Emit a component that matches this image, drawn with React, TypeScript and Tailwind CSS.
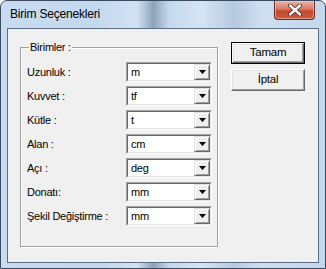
import React from "react";

const units: [string, string][] = [
  ["Uzunluk :", "m"],
  ["Kuvvet :", "tf"],
  ["Kütle :", "t"],
  ["Alan :", "cm"],
  ["Açı :", "deg"],
  ["Donatı:", "mm"],
  ["Şekil Değiştirme :", "mm"],
];

function Combo({ value }: { value: string }) {
  return (
    <div className="h-[20px] w-[86px] border border-t-[#a0a0a0] border-l-[#a0a0a0] border-r-white border-b-white">
      <div className="flex h-full w-full items-stretch border border-t-[#696969] border-l-[#696969] border-r-[#e3e3e3] border-b-[#e3e3e3] bg-white">
        <span className="flex-1 pl-[3px] leading-[16px]">{value}</span>
        <div className="flex w-[16px] items-center justify-center border border-t-[#e3e3e3] border-l-[#e3e3e3] border-r-[#696969] border-b-[#696969] bg-[#f0f0f0] shadow-[inset_1px_1px_0_#fff,inset_-1px_-1px_0_#a0a0a0]">
          <svg width="7" height="4" viewBox="0 0 7 4">
            <path d="M0 0h7L3.5 4z" fill="#000" />
          </svg>
        </div>
      </div>
    </div>
  );
}

function Button({ label, primary }: { label: string; primary?: boolean }) {
  return (
    <div className={primary ? "h-[22px] w-[74px] border border-black" : "h-[22px] w-[74px]"}>
      <div className="flex h-full w-full items-center justify-center border border-t-white border-l-white border-r-[#696969] border-b-[#696969] bg-[#f0f0f0] text-[11.5px] shadow-[inset_-1px_-1px_0_#a0a0a0,inset_1px_1px_0_#e3e3e3]">
        {label}
      </div>
    </div>
  );
}

export default function App() {
  return (
    <div className="relative flex h-[269px] w-[326px] flex-col rounded-t-[7px] border border-[#3a4a5e] bg-[linear-gradient(90deg,#c9dbef_0%,#c4d8ee_30%,#d2e2f3_42%,#8ea3bb_47%,#c6d9ee_52%,#d6e4f3_62%,#b5c9df_72%,#cfdff1_80%,#c3d7ed_100%)] font-['Liberation_Sans',Arial,sans-serif] text-[11px] tracking-[-0.25px] text-black">
      <div className="flex h-[27px] items-center pl-[9px] pb-[2px] text-[12px] tracking-[-0.2px]">Birim Seçenekleri</div>

      <div className="absolute right-[10px] top-0 flex h-[19px] w-[41px] items-center justify-center rounded-b-[4px] border border-t-0 border-[#6b2a20] bg-[linear-gradient(180deg,#eab1a3_0%,#d77a66_45%,#c44a32_55%,#c75a3e_100%)] shadow-[inset_0_0_0_1px_rgba(255,220,210,0.5)]">
        <svg width="14" height="12" viewBox="0 0 14 12">
          <path d="M2 1.5l10 9M12 1.5l-10 9" stroke="#5a2a22" strokeWidth="4.2" strokeLinecap="round" />
          <path d="M2 1.5l10 9M12 1.5l-10 9" stroke="#fff" strokeWidth="2.4" strokeLinecap="round" />
        </svg>
      </div>

      <div className="mx-[6px] mb-[5px] flex flex-1 items-start border border-[#5a6d85] bg-[#f0f0f0] pl-[12px] pt-[13px]">
        <div className="relative mt-[5px] h-[200px] w-[198px] border border-[#a0a0a0] shadow-[inset_1px_1px_0_#fff,1px_1px_0_#fff]">
          <span className="absolute left-[8px] top-[-7px] bg-[#f0f0f0] px-[1px] leading-[13px]">Birimler :</span>
          <div className="flex flex-col gap-[4px] pl-[6px] pt-[14px]">
            {units.map(([label, value], i) => (
              <div key={i} className="flex h-[20px] items-center">
                <span className="w-[99px]">{label}</span>
                <Combo value={value} />
              </div>
            ))}
          </div>
        </div>

        <div className="ml-[13px] flex flex-col gap-[5px]">
          <Button label="Tamam" primary />
          <Button label="İptal" />
        </div>
      </div>
    </div>
  );
}
